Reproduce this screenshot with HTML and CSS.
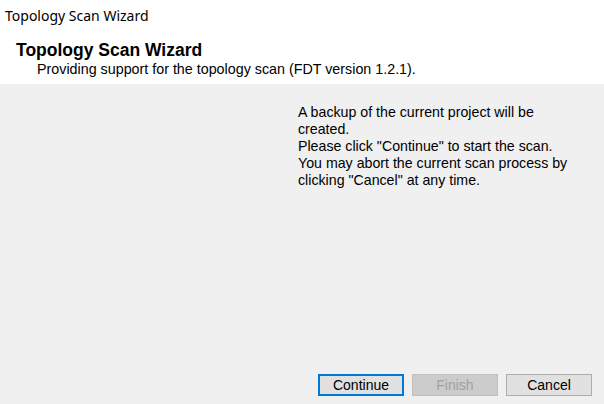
FILE: index.html
```html
<!DOCTYPE html>
<html>
<head>
<meta charset="utf-8">
<link rel="stylesheet" href="styles.css">
</head>
<body>
<div class="window">
  <div class="titlebar">Topology Scan Wizard</div>
  <div class="header">
    <div class="heading">Topology Scan Wizard</div>
    <div class="subtitle">Providing support for the topology scan (FDT version 1.2.1).</div>
  </div>
  <div class="main">
    <div class="content">
      <div class="message">A backup of the current project will be<br>created.<br>Please click "Continue" to start the scan.<br>You may abort the current scan process by<br>clicking "Cancel" at any time.</div>
    </div>
    <div class="footer">
      <button class="btn btn-default">Continue</button>
      <button class="btn btn-disabled" disabled>Finish</button>
      <button class="btn">Cancel</button>
    </div>
  </div>
</div>
</body>
</html>
```

FILE: styles.css
```css
html, body {
  margin: 0;
  padding: 0;
  background: #ffffff;
}
.window {
  width: 604px;
  height: 404px;
  display: flex;
  flex-direction: column;
  font-family: "Liberation Sans", Arial, sans-serif;
  color: #000;
}
.titlebar {
  height: 32px;
  line-height: 32px;
  padding-left: 5px;
  font-family: "Noto Sans", "Open Sans", sans-serif;
  font-size: 14px;
  background: #fff;
}
.header {
  background: #fff;
  padding: 8px 0 6px 16px;
}
.heading {
  font-size: 17.5px;
  font-weight: bold;
  line-height: 20px;
}
.subtitle {
  font-size: 14.3px;
  line-height: 18px;
  padding-left: 21px;
}
.main {
  flex: 1;
  background: #f0f0f0;
  display: flex;
  flex-direction: column;
}
.content {
  flex: 1;
  padding: 20px 0 0 298px;
}
.message {
  font-size: 14.2px;
  line-height: 17px;
}
.footer {
  display: flex;
  justify-content: flex-end;
  gap: 8px;
  padding: 0 12px 8px 0;
}
.btn {
  box-sizing: border-box;
  width: 86px;
  height: 22px;
  margin: 0;
  padding: 0;
  font-family: "Liberation Sans", Arial, sans-serif;
  font-size: 14px;
  color: #000;
  background: #e1e1e1;
  border: 1px solid #adadad;
  border-radius: 0;
}
.btn-default {
  border: 2px solid #0078d7;
}
.btn-disabled {
  background: #cccccc;
  border-color: #bfbfbf;
  color: #a0a0a0;
}
```
